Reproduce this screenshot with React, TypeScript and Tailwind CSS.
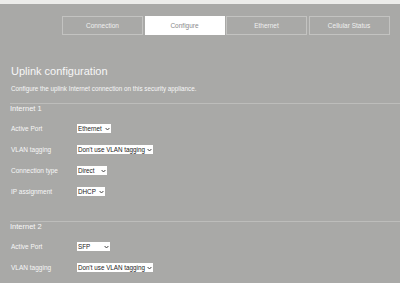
import React from 'react'

const tabs = ['Connection', 'Configure', 'Ethernet', 'Cellular Status']

function Chevron() {
  return (
    <svg width="5" height="4" viewBox="0 0 5 4" className="shrink-0">
      <path d="M0.6 1 L2.5 3 L4.4 1" fill="none" stroke="#333" strokeWidth="0.9" />
    </svg>
  )
}

function FakeSelect({ value, width }: { value: string; width: string }) {
  return (
    <div className={`flex h-[9px] items-center justify-between gap-[1px] bg-white pl-[1px] pr-[1.5px] text-[6.3px] leading-none text-[#222] ${width}`}>
      <span className="whitespace-nowrap">{value}</span>
      <Chevron />
    </div>
  )
}

function Row({ label, value, width }: { label: string; value: string; width: string }) {
  return (
    <div className="flex h-[21px] items-center">
      <span className="w-[66px] shrink-0 text-[6.5px] leading-none">{label}</span>
      <FakeSelect value={value} width={width} />
    </div>
  )
}

function Group({ title, children }: { title: string; children: React.ReactNode }) {
  return (
    <div>
      <div className="border-t border-[#bdbdbb]">
        <div className="h-[8px] pt-[0.5px] text-[7.5px] leading-[8px]">{title}</div>
      </div>
      <div className="mt-[6px]">{children}</div>
    </div>
  )
}

export default function App() {
  return (
    <main className="min-h-screen bg-[#a9a9a7] font-['Liberation_Sans',Arial,sans-serif] text-[#f7f7f7]">
      <div className="h-[4px] bg-[#ececea]" />

      <nav className="flex pl-[62px] pt-[12px] gap-[1.5px]">
        {tabs.map(t => (
          <div
            key={t}
            className={
              t === 'Configure'
                ? 'flex h-[19px] w-[80px] items-center justify-center border border-white bg-white text-[6.5px] text-[#8a8a8a]'
                : 'flex h-[19px] w-[81px] items-center justify-center border border-[#c3c3c1] text-[6.5px] text-[#f0f0f0]'
            }
          >
            {t}
          </div>
        ))}
      </nav>

      <section className="pl-[10px] pt-[31px]">
        <h1 className="pl-[1px] text-[11px] leading-[11px]">Uplink configuration</h1>
        <p className="mt-[9px] pl-[1px] text-[6.3px] leading-none">
          Configure the uplink Internet connection on this security appliance.
        </p>

        <div className="mt-[11px]">
          <Group title="Internet 1">
            <div className="pl-[1px]">
              <Row label="Active Port" value="Ethernet" width="w-[34px]" />
              <Row label="VLAN tagging" value="Don't use VLAN tagging" width="w-[76px]" />
              <Row label="Connection type" value="Direct" width="w-[30px]" />
              <Row label="IP assignment" value="DHCP" width="w-[28px]" />
            </div>
          </Group>
        </div>

        <div className="mt-[19px]">
          <Group title="Internet 2">
            <div className="pl-[1px]">
              <Row label="Active Port" value="SFP" width="w-[33px]" />
              <Row label="VLAN tagging" value="Don't use VLAN tagging" width="w-[76px]" />
            </div>
          </Group>
        </div>
      </section>
    </main>
  )
}
